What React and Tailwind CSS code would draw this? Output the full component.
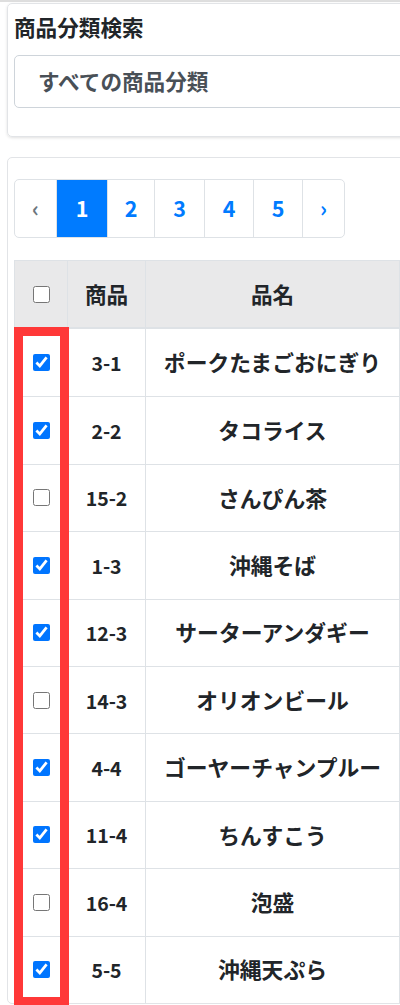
import React from "react";

const rows = [
  { code: "3-1", name: "ポークたまごおにぎり", checked: true },
  { code: "2-2", name: "タコライス", checked: true },
  { code: "15-2", name: "さんぴん茶", checked: false },
  { code: "1-3", name: "沖縄そば", checked: true },
  { code: "12-3", name: "サーターアンダギー", checked: true },
  { code: "14-3", name: "オリオンビール", checked: false },
  { code: "4-4", name: "ゴーヤーチャンプルー", checked: true },
  { code: "11-4", name: "ちんすこう", checked: true },
  { code: "16-4", name: "泡盛", checked: false },
  { code: "5-5", name: "沖縄天ぷら", checked: true },
];

const pages = [
  { label: "‹", w: "w-[41px]", cls: "text-[#6c757d]" },
  { label: "1", w: "w-[51px]", cls: "bg-[#007bff] text-white" },
  { label: "2", w: "w-[47px]", cls: "text-[#007bff]" },
  { label: "3", w: "w-[50px]", cls: "text-[#007bff]" },
  { label: "4", w: "w-[49px]", cls: "text-[#007bff]" },
  { label: "5", w: "w-[49px]", cls: "text-[#007bff]" },
  { label: "›", w: "w-[42px]", cls: "text-[#007bff]" },
];

function Check({ checked }) {
  return (
    <input
      type="checkbox"
      defaultChecked={checked}
      className="w-[17px] h-[17px] m-0 accent-[#0075ff]"
    />
  );
}

export default function App() {
  return (
    <div
      className="w-[400px] h-[1005px] overflow-hidden bg-white text-[#212529]"
      style={{ fontFamily: '"Noto Sans CJK JP", "Noto Sans", sans-serif' }}
    >
      <div className="h-[2px] bg-[#dedede]" />
      <div className="ml-[7px] mt-[1px] w-[420px] rounded-[5px] border border-[#e2e4e7] shadow-[0_1px_3px_rgba(0,0,0,0.12)] pt-[9px] pb-[28px] pl-[6px]">
        <div className="text-[21.6px] font-bold leading-[27px]">商品分類検索</div>
        <div className="mt-[15px] h-[53px] w-[420px] rounded-[5px] border border-[#ced4da] flex items-center pl-[23px] text-[21.6px] font-semibold text-[#495057]">
          すべての商品分類
        </div>
      </div>

      <div className="ml-[7px] mt-[20px] w-[420px] rounded-[5px] border border-[#e2e4e7] pl-[6px] pt-[21px] relative">
        <div className="flex h-[59px] w-fit rounded-[5px] border border-[#dee2e6] overflow-hidden">
          {pages.map((p, i) => (
            <div
              key={i}
              className={`${p.w} ${p.cls} ${i > 0 ? "border-l border-[#dee2e6]" : ""} flex items-center justify-center text-[21.5px] font-bold`}
            >
              {p.label}
            </div>
          ))}
        </div>

        <div className="mt-[22px] w-[420px] border-l border-t border-[#dee2e6]">
          <div className="flex h-[68px] bg-[#e9e9ea] border-b-2 border-[#dee2e6] font-bold text-[21.6px]">
            <div className="w-[53px] flex items-center justify-center border-r border-[#dee2e6]">
              <Check checked={false} />
            </div>
            <div className="w-[78px] flex items-center justify-center border-r border-[#dee2e6]">
              商品
            </div>
            <div className="w-[254px] flex items-center justify-center border-r border-[#dee2e6]">
              品名
            </div>
            <div className="flex-1" />
          </div>
          {rows.map((r, i) => (
            <div
              key={i}
              className={`flex h-[67.4px] ${i > 0 ? "border-t border-[#dee2e6]" : ""}`}
            >
              <div className="w-[53px] flex items-center justify-center border-r border-[#dee2e6]">
                <Check checked={r.checked} />
              </div>
              <div className="w-[78px] flex items-center justify-center border-r border-[#dee2e6] text-[19.5px] font-bold">
                {r.code}
              </div>
              <div className="w-[254px] flex items-center justify-center border-r border-[#dee2e6] text-[21.8px] font-bold">
                {r.name}
              </div>
              <div className="flex-1" />
            </div>
          ))}
        </div>

        <div className="absolute left-[6px] top-[169px] w-[55px] h-[679px] border-[9px] border-[#ff3838] pointer-events-none" />
      </div>
    </div>
  );
}
